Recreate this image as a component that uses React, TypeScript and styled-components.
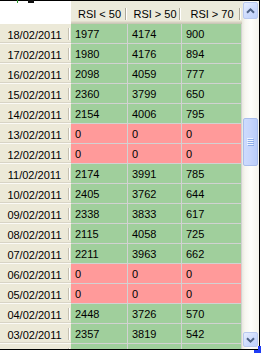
import React from "react";
import styled, { createGlobalStyle } from "styled-components";

const Global = createGlobalStyle`
  html, body { margin: 0; padding: 0; background: #fff; }
  body { font-family: "Liberation Sans", Arial, sans-serif; font-size: 11px; color: #000; }
`;

type Row = { date: string; a: number; b: number; c: number };

const rows: Row[] = [
  { date: "18/02/2011", a: 1977, b: 4174, c: 900 },
  { date: "17/02/2011", a: 1980, b: 4176, c: 894 },
  { date: "16/02/2011", a: 2098, b: 4059, c: 777 },
  { date: "15/02/2011", a: 2360, b: 3799, c: 650 },
  { date: "14/02/2011", a: 2154, b: 4006, c: 795 },
  { date: "13/02/2011", a: 0, b: 0, c: 0 },
  { date: "12/02/2011", a: 0, b: 0, c: 0 },
  { date: "11/02/2011", a: 2174, b: 3991, c: 785 },
  { date: "10/02/2011", a: 2405, b: 3762, c: 644 },
  { date: "09/02/2011", a: 2338, b: 3833, c: 617 },
  { date: "08/02/2011", a: 2115, b: 4058, c: 725 },
  { date: "07/02/2011", a: 2211, b: 3963, c: 662 },
  { date: "06/02/2011", a: 0, b: 0, c: 0 },
  { date: "05/02/2011", a: 0, b: 0, c: 0 },
  { date: "04/02/2011", a: 2448, b: 3726, c: 570 },
  { date: "03/02/2011", a: 2357, b: 3819, c: 542 },
];

const COLS = "71px 57px 54px 60px";

const Page = styled.div`
  position: relative;
  width: 265px;
  height: 353px;
  overflow: hidden;
`;

const Frame = styled.div`
  width: 259px;
  height: 348px;
  border-top: 1px solid #000;
  border-right: 1px solid #000;
  border-bottom: 1px solid #000;
  display: flex;
  overflow: hidden;
`;

const Grid = styled.div`
  width: 242px;
  display: flex;
  flex-direction: column;
  overflow: hidden;
`;

const HeaderRow = styled.div`
  display: grid;
  grid-template-columns: ${COLS};
  height: 23px;
  flex: none;
`;

const Corner = styled.div`
  background: #fff;
`;

const HeaderCell = styled.div`
  position: relative;
  display: flex;
  align-items: center;
  justify-content: center;
  padding-top: 3px;
  box-sizing: border-box;
  background: #ebeadb;
  box-shadow: inset 0 -1px #cbc7b8, inset 0 -2px #d6d2c2, inset 0 -3px #e2decd;
  &::after {
    content: "";
    position: absolute;
    right: 2px;
    top: 7px;
    bottom: 4px;
    width: 1px;
    background: #aca899;
    box-shadow: 1px 0 #fff;
  }
`;

const DataRow = styled.div`
  display: grid;
  grid-template-columns: ${COLS};
  height: 20px;
  flex: none;
`;

const RowHeader = styled.div`
  position: relative;
  display: flex;
  align-items: center;
  justify-content: center;
  padding-right: 2px;
  padding-top: 1px;
  box-sizing: border-box;
  background: #ece9d8;
  box-shadow: inset 0 -1px #fbfaf6, inset 0 -2px #d8d4c5;
  &::after {
    content: "";
    position: absolute;
    right: 2px;
    top: 4px;
    bottom: 4px;
    width: 1px;
    background: #c5c1b2;
    box-shadow: 1px 0 #fff;
  }
`;

const Cell = styled.div<{ $zero: boolean }>`
  display: flex;
  align-items: center;
  padding-left: 4px;
  padding-top: 1px;
  box-sizing: border-box;
  background: ${(p) => (p.$zero ? "#ff9a9a" : "#a0cf9c")};
  border-right: 1px solid #d2d2d2;
  border-bottom: 1px solid #d2d2d2;
`;

const ScrollTrack = styled.div`
  width: 17px;
  display: flex;
  flex-direction: column;
  align-items: center;
  background: linear-gradient(to right, #e9e8df 0px, #f7f6f0 3px, #fefefb 9px, #f4f3ec 17px);
`;

const ScrollButton = styled.div<{ $down?: boolean }>`
  flex: none;
  width: 15px;
  height: ${(p) => (p.$down ? "15px" : "17px")};
  margin-top: ${(p) => (p.$down ? "0" : "1px")};
  margin-bottom: ${(p) => (p.$down ? "2px" : "0")};
  box-sizing: border-box;
  border: 1px solid #b9c9ef;
  border-radius: 2px;
  background: linear-gradient(135deg, #e6eefe 0%, #cfdcfd 50%, #bccffa 100%);
  display: flex;
  align-items: center;
  justify-content: center;
`;

const Thumb = styled.div`
  flex: none;
  margin-top: 99px;
  width: 15px;
  height: 48px;
  box-sizing: border-box;
  border: 1px solid #a9bdec;
  border-radius: 2px;
  background: linear-gradient(to right, #cddbfd 0%, #c6d5fc 50%, #b9ccf9 100%);
  display: flex;
  align-items: center;
  justify-content: center;
`;

const Spacer = styled.div`
  flex: 1;
`;

const Mark = styled.div<{ $x: number; $y: number; $w: number; $h: number; $c: string }>`
  position: absolute;
  left: ${(p) => p.$x}px;
  top: ${(p) => p.$y}px;
  width: ${(p) => p.$w}px;
  height: ${(p) => p.$h}px;
  background: ${(p) => p.$c};
`;

const Chevron = ({ down }: { down?: boolean }) => (
  <svg width="9" height="6" viewBox="0 0 9 6">
    <path
      d={down ? "M1 1.2 L4.5 4.6 L8 1.2" : "M1 4.8 L4.5 1.4 L8 4.8"}
      fill="none"
      stroke="#4d6185"
      strokeWidth="2"
    />
  </svg>
);

const Grip = () => (
  <svg width="7" height="8" viewBox="0 0 7 8">
    {[0, 2, 4, 6].map((y) => (
      <g key={y}>
        <rect x="0" y={y} width="6" height="1" fill="#eef4ff" />
        <rect x="1" y={y + 1} width="6" height="1" fill="#8faee9" />
      </g>
    ))}
  </svg>
);

export default function App() {
  return (
    <Page>
      <Global />
      <Frame>
        <Grid>
          <HeaderRow>
            <Corner />
            <HeaderCell>RSI &lt; 50</HeaderCell>
            <HeaderCell>RSI &gt; 50</HeaderCell>
            <HeaderCell>RSI &gt; 70</HeaderCell>
          </HeaderRow>
          {rows.map((r) => {
            const zero = r.a === 0 && r.b === 0 && r.c === 0;
            return (
              <DataRow key={r.date}>
                <RowHeader>{r.date}</RowHeader>
                <Cell $zero={zero}>{r.a}</Cell>
                <Cell $zero={zero}>{r.b}</Cell>
                <Cell $zero={zero}>{r.c}</Cell>
              </DataRow>
            );
          })}
          <DataRow>
            <RowHeader />
            <Cell $zero={false} />
            <Cell $zero={false} />
            <Cell $zero={false} />
          </DataRow>
        </Grid>
        <ScrollTrack>
          <ScrollButton>
            <Chevron />
          </ScrollButton>
          <Thumb>
            <Grip />
          </Thumb>
          <Spacer />
          <ScrollButton $down>
            <Chevron down />
          </ScrollButton>
        </ScrollTrack>
      </Frame>
      <Mark $x={17} $y={0} $w={1} $h={3} $c="#2f9a2f" />
      <Mark $x={28} $y={0} $w={6} $h={3} $c="#111" />
      <Mark $x={254} $y={350} $w={6} $h={3} $c="#1f3cf5" />
      <Mark $x={258} $y={346} $w={3} $h={7} $c="#1f3cf5" />
    </Page>
  );
}
